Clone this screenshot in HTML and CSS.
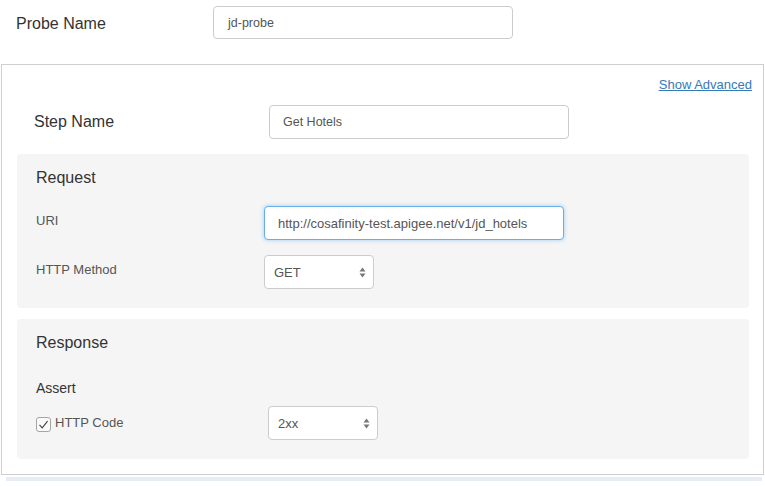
FILE: index.html
```html
<!DOCTYPE html>
<html>
<head>
<meta charset="utf-8">
<link rel="stylesheet" href="styles.css">
</head>
<body>
<div class="probe-row">
  <label class="probe-label">Probe Name</label>
  <div class="input">jd-probe</div>
</div>
<div class="panel">
  <div class="adv"><a href="#">Show Advanced</a></div>
  <div class="step-row">
    <label class="step-label">Step Name</label>
    <div class="input">Get Hotels</div>
  </div>
  <div class="section request">
    <div class="sec-title">Request</div>
    <div class="field-row uri-row">
      <label class="field-label">URI</label>
      <div class="input focus">http://cosafinity-test.apigee.net/v1/jd_hotels</div>
    </div>
    <div class="field-row method-row">
      <label class="field-label">HTTP Method</label>
      <div class="select"><span>GET</span>
        <svg class="arrows" width="7" height="11" viewBox="0 0 7 11"><path d="M3.5 0.5 L6.5 4.5 L0.5 4.5 Z M3.5 10.5 L6.5 6.5 L0.5 6.5 Z" fill="#777"/></svg>
      </div>
    </div>
  </div>
  <div class="section response">
    <div class="sec-title">Response</div>
    <div class="assert">Assert</div>
    <div class="field-row code-row">
      <label class="check-label">
        <svg class="checkbox" width="15" height="15" viewBox="0 0 15 15"><rect x="0.5" y="0.5" width="14" height="14" rx="2.5" fill="#fafafa" stroke="#a4a4a4"/><path d="M3.5 7.8 L6.2 10.8 L11.6 4.2" fill="none" stroke="#444" stroke-width="1.1"/></svg>
        <span class="check-text">HTTP Code</span>
      </label>
      <div class="select"><span>2xx</span>
        <svg class="arrows" width="7" height="11" viewBox="0 0 7 11"><path d="M3.5 0.5 L6.5 4.5 L0.5 4.5 Z M3.5 10.5 L6.5 6.5 L0.5 6.5 Z" fill="#777"/></svg>
      </div>
    </div>
  </div>
</div>
<div class="strip"></div>
</body>
</html>
```
FILE: styles.css
```css
* { box-sizing: border-box; }
body {
  margin: 0;
  font-family: "Liberation Sans", Arial, sans-serif;
  color: #333;
  background: #fff;
}
.probe-row {
  display: flex;
  align-items: center;
  padding: 6px 0 0 16px;
}
.probe-label {
  width: 197px;
  font-size: 16px;
  line-height: 20px;
  padding-top: 2px;
}
.input {
  width: 300px;
  height: 34px;
  border: 1px solid #cccccc;
  border-radius: 4px;
  background: #fff;
  font-size: 13px;
  color: #555;
  display: flex;
  align-items: center;
  padding-left: 13px;
}
.probe-row .input { height: 33px; padding-left: 14px; font-size: 12.5px; }
.input.focus {
  border-color: #66afe9;
  box-shadow: 0 0 4px rgba(102, 175, 233, 0.6);
}
.panel {
  margin: 25px 0 0 1px;
  width: 763px;
  border: 1px solid #cfcfcf;
  padding: 12px 0 15px 0;
}
.adv {
  text-align: right;
  padding-right: 11px;
  font-size: 13px;
  line-height: 16px;
}
.adv a { color: #337ab7; text-decoration: underline; }
.step-row {
  display: flex;
  align-items: center;
  margin-top: 12px;
  padding-left: 32px;
}
.step-label {
  width: 235px;
  font-size: 16px;
  line-height: 20px;
}
.step-row .input { font-size: 12.5px; }
.section {
  background: #f5f5f5;
  border-radius: 4px;
  margin: 15px 14px 0 15px;
  padding: 14px 0 19px 19px;
}
.response { margin-top: 11px; }
.sec-title {
  font-size: 16px;
  line-height: 20px;
  color: #333;
}
.field-row {
  display: flex;
  align-items: center;
}
.uri-row { margin-top: 18px; }
.method-row { margin-top: 15px; }
.field-label {
  width: 228px;
  font-size: 13px;
  line-height: 16px;
  color: #555;
  padding-bottom: 4px;
}
.select {
  width: 110px;
  height: 34px;
  border: 1px solid #cccccc;
  border-radius: 4px;
  background: #fff;
  display: flex;
  align-items: center;
  justify-content: space-between;
  padding: 0 7px 0 9px;
  font-size: 13px;
  color: #555;
}
.assert {
  margin-top: 26px;
  font-size: 14px;
  line-height: 18px;
  color: #333;
}
.code-row { margin-top: 9px; }
.check-label {
  width: 232px;
  display: flex;
  align-items: center;
  gap: 4px;
  font-size: 13px;
  color: #555;
}
.check-text { padding-bottom: 2px; }
.checkbox { display: block; margin-top: 2px; }
.strip {
  margin: 2px 0 0 6px;
  width: 756px;
  height: 4px;
  background: #e7edf7;
}
```
